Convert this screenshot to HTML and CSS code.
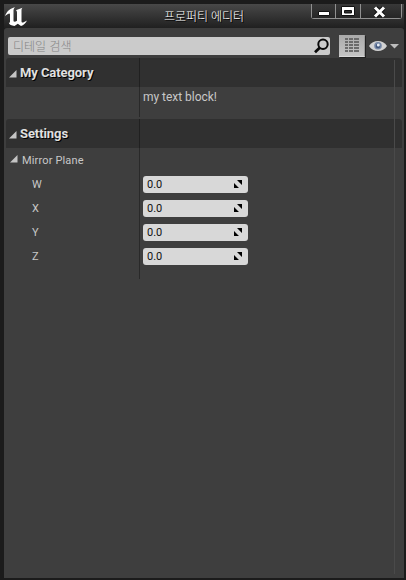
FILE: index.html
```html
<!DOCTYPE html>
<html lang="ko">
<head>
<meta charset="utf-8">
<title>프로퍼티 에디터</title>
<link rel="stylesheet" href="styles.css">
</head>
<body>
<div class="window">
  <header class="titlebar">
    <svg class="logo" width="24" height="20" viewBox="0 0 24 20"><path fill="#fff" d="M0 9C2 4 5 1.500 10 .3 8.500 1.700 8.500 3 8.500 4.500v9c0 1.500 1.500 1.500 3.500.3V5.500c0-1.200-.5-1.800-1.200-2.200L17.500.8c-1 1-1 2-1 3.200v10.200c0 1.300.8 1.500 1.700 1.200L22 13.500c-1.500 2.800-3.500 4.600-6 5.500l-3.200-2.300L9.500 19C6.500 18.700 4.200 17.500 3.800 15.800c.8.2 1.200-.3 1.200-1.300V7.500C5 5.500 3 6.500 0 9Z"/></svg>
    <h1 class="title">프로퍼티 에디터</h1>
    <div class="controls">
      <span class="control"><svg width="12" height="6" viewBox="0 0 12 6"><path fill="#fff" stroke="#111" d="M.5.500h11v4h-11z"/></svg></span>
      <span class="control"><svg width="14" height="11" viewBox="0 0 14 11"><path fill="#fff" stroke="#111" fill-rule="evenodd" d="M.5.500h13v9H.5zM3.500 4.500h7v2.500h-7z"/></svg></span>
      <span class="control close"><svg width="13" height="12" viewBox="0 0 13 12"><path stroke="#111" stroke-width="5" d="m2.500 2 8 8m0-8-8 8"/><path stroke="#fff" stroke-width="3" d="m2 1.500 9 9m0-9-9 9"/></svg></span>
    </div>
  </header>
  <main class="panel">
    <div class="toolbar">
      <div class="search"><span>디테일 검색</span>
        <svg width="16" height="16" viewBox="0 0 16 16" fill="none" stroke="#0b0b0b"><circle cx="9" cy="6.300" r="4.700" stroke-width="2"/><path stroke-width="2.800" d="m5.700 9.700-4.700 4.500"/></svg>
      </div>
      <div class="matrix"><svg width="14" height="15" viewBox="0 0 14 15" stroke="#6b6b6b" stroke-width="2"><path stroke-dasharray="3 1 4 1 5" d="M0 1h14"/><path stroke-dasharray="3 1 4 1 5" d="M0 4h14"/><path stroke-dasharray="3 1 4 1 5" d="M0 7h14"/><path stroke-dasharray="3 1 4 1 5" d="M0 10h14"/><path stroke-dasharray="3 1 4 1 5" d="M0 13h14"/></svg></div>
      <svg class="eye" width="18" height="12" viewBox="0 0 18 12"><path fill="#d2d2d2" d="M0 6C4-.7 14-.7 18 6c-4 6.700-14 6.700-18 0Z"/><circle cx="9" cy="5.800" r="3.800" fill="#7688a6"/><circle cx="9" cy="6" r="2.300" fill="#40557a"/><circle cx="9.300" cy="5" r="1.500" fill="#e8eef6"/></svg>
      <svg class="caret" width="9" height="5" viewBox="0 0 9 5"><path fill="#bdbdbd" d="M0 0h9L4.500 4.500z"/></svg>
    </div>
    <div class="details">
      <section class="group">
        <h2 class="heading"><svg width="8" height="8" viewBox="0 0 8 8"><path fill="#c4c4c4" d="M7.500 0v7.500H0z"/></svg><span>My Category</span></h2>
        <div class="row text-row"><span class="label"></span><span class="text">my text block!</span></div>
      </section>
      <section class="group settings">
        <h2 class="heading"><svg width="8" height="8" viewBox="0 0 8 8"><path fill="#c4c4c4" d="M7.500 0v7.500H0z"/></svg><span>Settings</span></h2>
        <div class="row"><span class="label parent"><svg width="8" height="8" viewBox="0 0 8 8"><path fill="#c4c4c4" d="M7.500 0v7.500H0z"/></svg>Mirror Plane</span></div>
        <div class="row"><span class="label">W</span><span class="field">0.0<svg width="8" height="8" viewBox="0 0 8 8"><path d="M3 0h5v5zM0 3v5h5z"/></svg></span></div>
        <div class="row"><span class="label">X</span><span class="field">0.0<svg width="8" height="8" viewBox="0 0 8 8"><path d="M3 0h5v5zM0 3v5h5z"/></svg></span></div>
        <div class="row"><span class="label">Y</span><span class="field">0.0<svg width="8" height="8" viewBox="0 0 8 8"><path d="M3 0h5v5zM0 3v5h5z"/></svg></span></div>
        <div class="row"><span class="label">Z</span><span class="field">0.0<svg width="8" height="8" viewBox="0 0 8 8"><path d="M3 0h5v5zM0 3v5h5z"/></svg></span></div>
      </section>
      <div class="scrollbar"></div>
    </div>
  </main>
</div>
</body>
</html>
```
FILE: styles.css
```css
* { box-sizing: border-box; }
body {
  margin: 0;
  background: #1b1b1b;
  color: #c8c8c8;
  font: 12px Roboto, "Noto Sans CJK KR", sans-serif;
}
svg { display: block; flex: none; }
.window {
  display: flex;
  flex-direction: column;
  width: 406px;
  height: 580px;
  padding: 4px 2px 2px 4px;
}
.titlebar {
  position: relative;
  display: flex;
  align-items: center;
  justify-content: center;
  height: 24px;
  background: linear-gradient(#484848, #202020);
}
.logo { position: absolute; left: 1px; top: 3px; }
.title {
  margin: 0;
  padding-bottom: 1px;
  font: 300 12px "Noto Sans CJK KR", sans-serif;
  letter-spacing: -0.1px;
  color: #fff;
  text-shadow: 1px 1px 0 #000;
}
.controls {
  position: absolute;
  right: 2px;
  top: 0;
  display: flex;
  height: 15px;
  border: 1px solid #909090;
  border-top: 0;
  border-radius: 0 0 3px 3px;
}
.control {
  display: flex;
  align-items: center;
  justify-content: center;
  width: 23px;
  background: linear-gradient(#383838, #262626);
}
.control svg { margin-top: 1px; }
.control + .control { border-left: 1px solid #909090; }
.control:first-child svg { margin-top: 5px; }
.control:nth-child(2) { width: 25px; }
.control.close { width: 41px; }
.control.close svg { margin-right: 3px; }
.panel {
  flex: 1;
  display: flex;
  flex-direction: column;
  padding: 6px 2px 4px;
  border-radius: 3px 3px 0 0;
  background: #3e3e3e;
}
.toolbar {
  display: flex;
  align-items: center;
  height: 24px;
  padding-left: 2px;
}
.search {
  display: flex;
  align-items: center;
  justify-content: space-between;
  width: 322px;
  height: 18px;
  margin-right: 9px;
  padding: 0 0 0 5px;
  border-radius: 2px;
  background: #cbcbcb;
  color: #858585;
  font: 300 12px "Noto Sans CJK KR", sans-serif;
}
.search span { padding-bottom: 1px; }
.matrix {
  display: flex;
  align-items: center;
  justify-content: center;
  width: 26px;
  height: 22px;
  margin-bottom: 1px;
  border-right: 1px solid #999;
  border-bottom: 1px solid #d8d8d8;
  background: linear-gradient(#aaa, #c4c4c4);
  box-shadow: 1px 1px 0 #222;
}
.eye { margin: 0 0 0 4px; }
.caret { margin: 0 0 0 3px; }
.details {
  position: relative;
  flex: 1;
  width: 396px;
}
.group {
  height: 59px;
  background: linear-gradient(90deg, transparent 133px, #292929 133px 134px, transparent 134px);
}
.settings { height: 160px; margin-top: 2px; }
.heading {
  display: flex;
  align-items: center;
  gap: 3px;
  height: 29px;
  margin: 0;
  padding-left: 3px;
  border-radius: 3px 3px 0 0;
  background: linear-gradient(90deg, #303030 133px, #202020 133px 134px, #303030 134px);
  color: #e0e0e0;
  font-size: 13px;
  font-weight: 700;
  letter-spacing: -0.08px;
  text-shadow: 1px 1px 0 #000;
}
.heading svg { margin-top: 2px; }
.row { display: flex; align-items: center; height: 24px; }
.text-row { height: 19px; }
.text { letter-spacing: -0.03px; }
.label { width: 137px; padding-left: 26px; font-size: 11px; }
.label.parent { display: flex; align-items: center; gap: 4px; padding-left: 4px; letter-spacing: 0.15px; }
.parent svg { margin-top: -2px; }
.field {
  display: flex;
  align-items: center;
  justify-content: space-between;
  width: 105px;
  height: 17px;
  padding: 0 6px 0 4px;
  border-radius: 3px;
  background: #d8d8d8;
  color: #111;
  font-size: 11px;
}
.scrollbar {
  position: absolute;
  left: 388px;
  top: 2px;
  bottom: 0;
  width: 1px;
  background: #4a4a4a;
}
```
